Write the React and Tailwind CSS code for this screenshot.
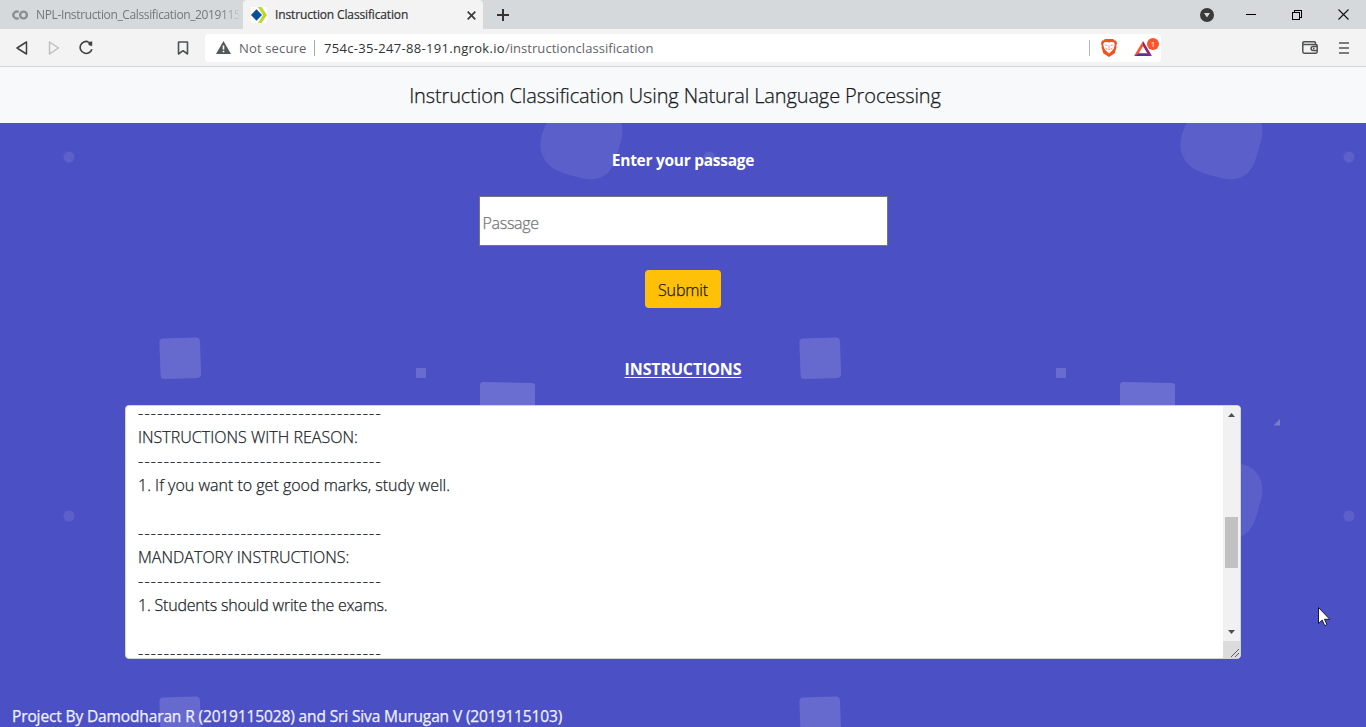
import React from "react";

const DASHES = "--------------------------------------";
const DASH_CLS = "tracking-[1.27px]";

const LINES = [
  { text: DASHES, cls: DASH_CLS },
  { text: "INSTRUCTIONS WITH REASON:", cls: "tracking-[0.02px]" },
  { text: DASHES, cls: DASH_CLS },
  { text: "1. If you want to get good marks, study well.", cls: "tracking-[0px]" },
  { text: "", cls: "" },
  { text: DASHES, cls: DASH_CLS },
  { text: "MANDATORY INSTRUCTIONS:", cls: "tracking-[0.02px]" },
  { text: DASHES, cls: DASH_CLS },
  { text: "1. Students should write the exams.", cls: "tracking-[-0.2px]" },
  { text: "", cls: "" },
  { text: DASHES, cls: DASH_CLS },
];

function TabStrip() {
  return (
    <div className="flex h-[29px] shrink-0 items-stretch bg-[#d5d9dc] text-[12px]">
      <div className="flex w-[243px] items-center pl-[12px]">
        <svg width="16" height="12" viewBox="0 0 16 12" fill="none" stroke="#8d9093" strokeWidth="2.4" className="shrink-0">
          <path d="M6.6 3.1A3.4 3.4 0 1 0 6.6 8.9" />
          <circle cx="11.5" cy="6" r="3.4" />
        </svg>
        <div className="ml-[8px] w-[204px] overflow-hidden whitespace-nowrap tracking-[-0.37px] text-[#73777a] [mask-image:linear-gradient(to_right,black_185px,transparent_205px)]">
          NPL-Instruction_Calssification_2019115
        </div>
      </div>
      <div className="flex w-[240px] items-center rounded-t-[4px] bg-[#f3f3f3] pl-[8px]">
        <svg width="16" height="16" viewBox="0 0 16 16" className="shrink-0">
          <rect width="16" height="16" fill="#fff" />
          <path d="M7 0h3.500L16 8l-5.500 8H7l5-8z" fill="#bdd62e" />
          <path d="M5.500 2.200 11 8l-5.500 5.800L0 8z" fill="#075196" />
        </svg>
        <span className="ml-[8px] whitespace-nowrap tracking-[-0.14px] text-[#303234] [-webkit-text-stroke:0.2px_#303234]">Instruction Classification</span>
        <svg width="9" height="9" viewBox="0 0 9 9" stroke="#3b3b3b" strokeWidth="1.7" className="ml-auto mr-[7px] mt-[1px]">
          <path d="M0.700 0.700 8.300 8.300M8.300 0.700 0.700 8.300" />
        </svg>
      </div>
      <div className="flex grow items-center pl-[14px]">
        <svg width="12" height="12" viewBox="0 0 12 12" stroke="#333" strokeWidth="2" className="mt-[1px]">
          <path d="M6 0v12M0 6h12" />
        </svg>
      </div>
      <div className="flex items-center pr-[17px]">
        <svg width="14" height="14" viewBox="0 0 14 14" className="mr-[32px] mt-[1px]">
          <circle cx="7" cy="7" r="7" fill="#3a3a3a" />
          <path d="M4 5h6L7 9.500z" fill="#d5d9dc" />
        </svg>
        <svg width="10" height="11" viewBox="0 0 10 11" className="mr-[36px]">
          <path d="M0 5.500h10" stroke="#000" />
        </svg>
        <svg width="10" height="10" viewBox="0 0 10 10" fill="none" stroke="#000" className="mr-[36px]" shapeRendering="crispEdges">
          <path d="M0.500 2.500h7v7h-7zM2.500 2.500v-2h7v7h-2" />
        </svg>
        <svg width="11" height="11" viewBox="0 0 11 11" stroke="#111" strokeWidth="1.100">
          <path d="M0.500 0.500l10 10M10.500 0.500l-10 10" />
        </svg>
      </div>
    </div>
  );
}

function Toolbar() {
  return (
    <div className="flex h-[38px] shrink-0 items-center border-b border-[#d2d4d8] bg-[#f3f3f3]">
      <svg width="12" height="14" viewBox="0 0 12 14" fill="none" stroke="#3f4143" strokeWidth="1.500" strokeLinejoin="round" className="ml-[16px]">
        <path d="M10.500 1v12L1 7z" />
      </svg>
      <svg width="12" height="14" viewBox="0 0 12 14" fill="none" stroke="#bcbec0" strokeWidth="1.400" strokeLinejoin="round" className="ml-[20px]">
        <path d="M1.500 1v12L10.500 7z" />
      </svg>
      <svg width="15" height="15" viewBox="0 0 15 15" fill="none" className="ml-[19px]">
        <path d="M9.500 1.900A6 6 0 1 0 12.900 9.200" stroke="#3f4143" strokeWidth="1.600" />
        <path d="M9.200 2.200 13 1.700 12.900 5.800 10 5z" fill="#3f4143" stroke="#3f4143" strokeWidth=".5" strokeLinejoin="round" />
      </svg>
      <svg width="12" height="14" viewBox="0 0 12 14" fill="none" stroke="#505355" strokeWidth="1.600" strokeLinejoin="round" className="ml-[83px]">
        <path d="M1.500 1h9v12L6 9.700 1.500 13z" />
      </svg>
      <div className="ml-[16px] flex h-[28px] w-[956px] items-center rounded-[4px] bg-white text-[13px] text-[#5f6368]">
        <svg width="15" height="13" viewBox="0 0 15 13" className="ml-[11px]">
          <path d="M7.500 0 15 13H0z" fill="#55585b" />
          <path d="M7.500 4.500V8.600M7.500 9.700v1.500" stroke="#fff" strokeWidth="1.600" />
        </svg>
        <span className="ml-[8px] w-[75px] whitespace-nowrap pt-[2px] tracking-[0.15px]">Not secure</span>
        <span className="h-[16px] w-px bg-[#a8abae]" />
        <span className="ml-[9px] whitespace-nowrap pt-[2px]">
          <span className="tracking-[0.31px] text-[#303336]">754c-35-247-88-191.ngrok.io</span>
          <span className="tracking-[0.05px]">/instructionclassification</span>
        </span>
        <span className="ml-auto h-[16px] w-px bg-[#b5b7b9]" />
        <svg width="16" height="18" viewBox="0 0 16 18" className="ml-[11px]">
          <path d="M4 0h8l1.600 1.600h1.500L16 4.500l-.8 2.500.3 1.200-1.800 6L8 18l-5.700-3.800-1.800-6L.8 7 0 4.500 1 1.600h1.400z" fill="#f4511b" />
          <path d="M3.200 3.300 6 3l2 .5L10 3l2.800.3 1 2-1 4.200-2 2.500L8 14.500 5.200 12l-2-2.500-1-4.200z" fill="#fff" />
          <path d="M4.200 6l2.200.5M11.800 6l-2.200.5M8 6.500v2.800M6.700 9.900 8 10.700l1.300-.8M4.800 8.700l1.100 1.900M11.200 8.700l-1.100 1.900" fill="none" stroke="#f4511b" strokeWidth=".6" />
        </svg>
        <div className="relative ml-[17px] mr-[2px] h-[20px] w-[25px]">
          <svg width="25" height="20" viewBox="0 0 25 20">
            <path d="M9 3 0 18l4.600-2.600L9.200 8z" fill="#fa552c" />
            <path d="M9 3l9 15-4.600-2.600L9 8z" fill="#9e1f63" />
            <path d="M0 18h18l-4.600-2.800H4.600z" fill="#662d91" />
            <circle cx="19" cy="6" r="6" fill="#fb542b" />
          </svg>
          <span className="absolute left-[13px] top-[1px] w-[12px] text-center text-[8px] leading-[10px] text-white">1</span>
        </div>
      </div>
      <svg width="16" height="13" viewBox="0 0 16 13" fill="none" stroke="#505254" strokeWidth="1.500" className="ml-auto mr-[21px]">
        <path d="M13.500 3.500V2A1.200 1.200 0 0 0 12.300.8H2A1.200 1.200 0 0 0 .8 2v8.800A1.400 1.400 0 0 0 2.200 12.200H13.800A1.400 1.400 0 0 0 15.200 10.800V4.700A1.200 1.200 0 0 0 14 3.500H1.500M15 5.600h-4a1.900 1.900 0 0 0 0 3.800h4M11 7.500h1.500" />
      </svg>
      <svg width="10" height="12" viewBox="0 0 10 12" stroke="#555" strokeWidth="1.600" className="mr-[17px]">
        <path d="M0 1h10M0 6h10M0 11h10" />
      </svg>
    </div>
  );
}

function ShapesBackground() {
  return (
    <svg className="absolute inset-0 -z-10" width="1366" height="604" viewBox="0 123 1366 604">
      <defs>
        <pattern id="shapes" x="0" y="67" width="640" height="359" patternUnits="userSpaceOnUse">
          <rect width="640" height="359" fill="#4b50c5" />
          <circle cx="69" cy="90" r="5.500" fill="#5c60cb" />
          <path d="M560 34Q547 51 542 67Q537 85 548 97Q554 103 566 107L585 112Q609 115 616 91L622 70Q625 45 602 38Z" fill="#5a5fca" />
          <rect x="160" y="271" width="40.500" height="40.500" rx="4" fill="#666acf" transform="rotate(-2 180 291)" />
          <rect x="416" y="301" width="10" height="10" rx="1" fill="#686cd0" />
          <path d="M480 318q0-3 3-3l49 1q3 0 3 3v40h-55z" fill="#6a6ed1" />
          <path d="M633.500 358.500h6.500v-6.500z" fill="#797ec5" />
        </pattern>
      </defs>
      <rect y="123" width="1366" height="604" fill="url(#shapes)" />
    </svg>
  );
}

function Results() {
  return (
    <div className="flex h-[254px] w-[1116px] overflow-hidden rounded-[4px] border border-[#ced4da] bg-white">
      <div className="grow overflow-hidden pl-[12px] text-[16px] leading-[24px] text-[#212529] [-webkit-text-stroke:0.25px_#212529]">
        <div className="mt-[-5px]">
          {LINES.map((line, i) => (
            <div key={i} className={"h-[24px] whitespace-pre " + line.cls}>{line.text}</div>
          ))}
        </div>
      </div>
      <div className="flex w-[17px] shrink-0 flex-col items-center bg-[#f1f1f1]">
        <svg width="7" height="4" viewBox="0 0 7 4" className="mt-[7px]"><path d="M3.500 0 7 4H0z" fill="#505050" /></svg>
        <div className="mt-[100px] h-[51px] w-[13px] bg-[#c1c1c1]" />
        <svg width="7" height="4" viewBox="0 0 7 4" className="mt-[62px]"><path d="M3.500 4 7 0H0z" fill="#505050" /></svg>
        <div className="mt-auto h-[17px] w-[17px] bg-[#dcdcdc]">
          <svg width="17" height="17" viewBox="0 0 17 17" stroke="#5c5c5c" strokeWidth="1"><path d="M8 16l8-8M12 16l4-4" /></svg>
        </div>
      </div>
    </div>
  );
}

export default function App() {
  return (
    <div className="relative flex h-[727px] w-[1366px] flex-col overflow-hidden font-['Open_Sans','Noto_Sans',sans-serif]">
      <TabStrip />
      <Toolbar />
      <header className="flex h-[56px] shrink-0 items-center justify-center bg-[#f8f9fa] pr-[16px] pt-[2px]">
        <h1 className="whitespace-nowrap text-[20px] font-light tracking-[-0.13px] text-[#15181b] [-webkit-text-stroke:0.25px_#15181b]">Instruction Classification Using Natural Language Processing</h1>
      </header>
      <main className="relative isolate flex h-[604px] flex-col items-center text-[16px] font-light *:shrink-0">
        <ShapesBackground />
        <label className="mt-[25px] whitespace-nowrap text-[15.500px] font-bold leading-[24px] tracking-[-0.28px] text-white">Enter your passage</label>
        <input placeholder="Passage" className="mt-[24px] h-[50px] w-[409px] border border-[#767676] bg-white px-[3px] pt-[3px] tracking-[-0.3px] [-webkit-text-stroke:0.25px_#757575] placeholder:text-[#757575]" />
        <button className="mt-[24px] h-[38px] w-[76px] rounded-[4px] bg-[#ffc107] pt-[1px] tracking-[-0.15px] text-[#15181b] [-webkit-text-stroke:0.25px_#15181b]">Submit</button>
        <h2 className="mt-[49px] whitespace-nowrap font-bold leading-[24px] tracking-[-0.13px] text-white underline underline-offset-2">INSTRUCTIONS</h2>
        <div className="mt-[24px]"><Results /></div>
        <footer className="mt-[45px] self-start whitespace-nowrap pl-[12px] text-[15.500px] font-normal leading-[24px] tracking-[-0.13px] text-[#f0f0fc] [-webkit-text-stroke:0.25px_#f0f0fc]">
          Project By Damodharan R (2019115028) and Sri Siva Murugan V (2019115103)
        </footer>
      </main>
      <svg className="absolute left-[1318px] top-[607px]" width="13" height="20" viewBox="0 0 13 20">
        <path d="M.5.500v16l3.700-3.400 2.500 5.600 2.300-1-2.500-5.400h5.300z" fill="#fff" stroke="#16163c" />
      </svg>
    </div>
  );
}
